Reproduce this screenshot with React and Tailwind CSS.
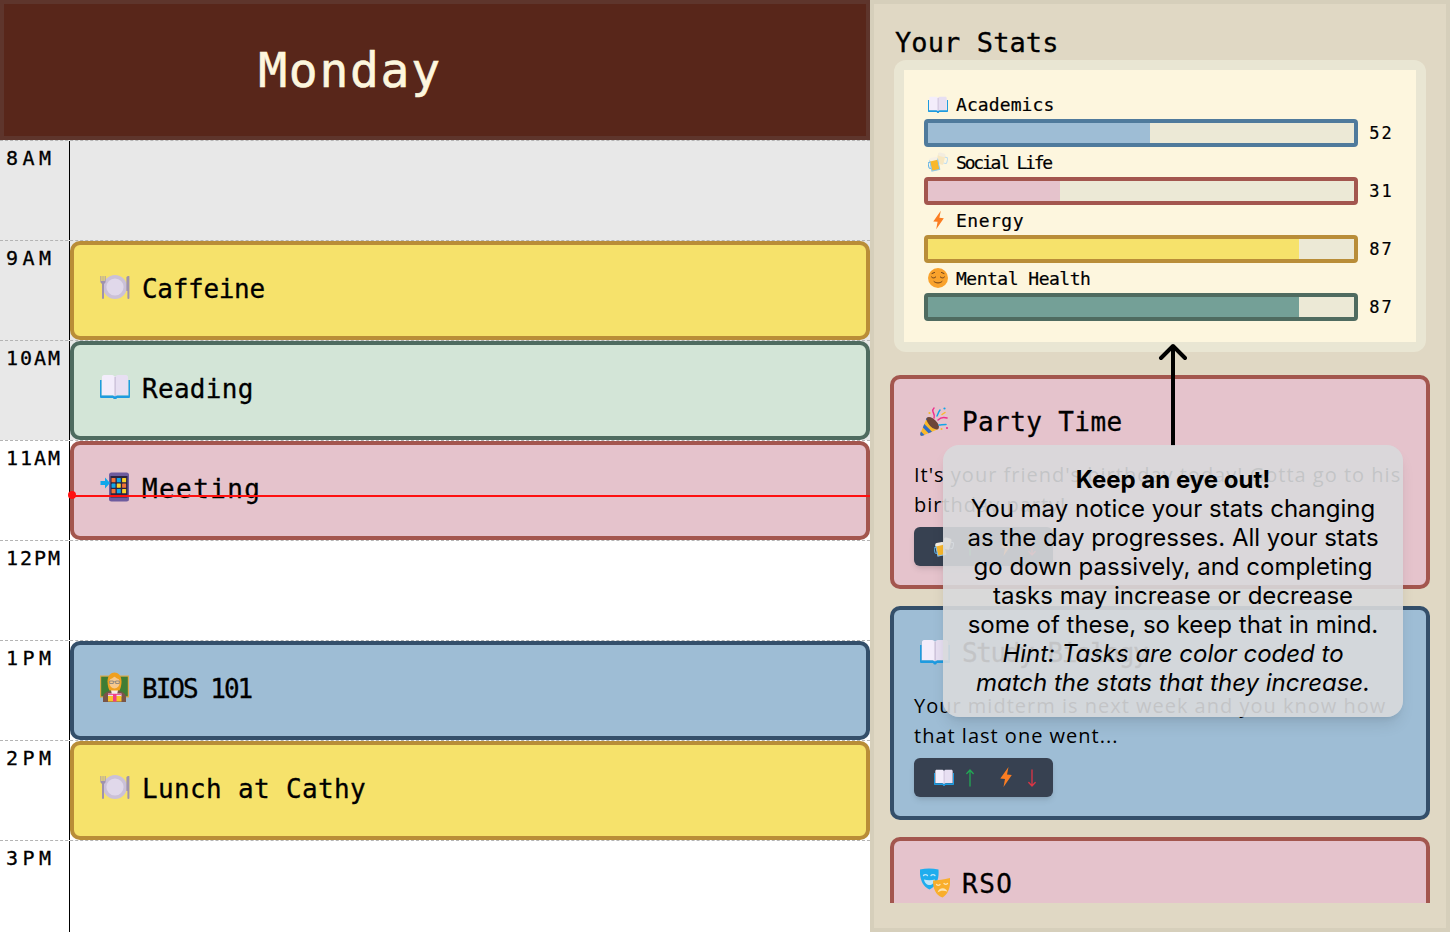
import React from "react";

const mono = "[font-family:'DejaVu_Sans_Mono',monospace]";

function Plate({ s = 30 }) {
  return (
    <svg width={s} height={s * 0.8} viewBox="0 0 30 24">
      <circle cx="15" cy="12" r="12" fill="#cbc1d8" />
      <circle cx="15" cy="12" r="8.6" fill="#e0d8ea" />
      <path d="M0.4 1v5.5c0 1.2.8 2 1.6 2.3V23a1 1 0 0 0 2 0V8.8c.8-.3 1.6-1.1 1.6-2.3V1h-.9v5H3.4V1h-.8v5H1.3V1z" fill="#9f92ad" />
      <path d="M26.4 2.2C27 1 29 .5 29.4 1.2V23a1 1 0 0 1-2 0v-7h-1z" fill="#9f92ad" />
    </svg>
  );
}

function Book({ s = 30 }) {
  return (
    <svg width={s} height={s * 0.85} viewBox="0 0 30 25.5">
      <path d="M0 6h1.5v15.5h27V6H30v17a1 1 0 0 1-1 1H17l-1 1.5h-2L13 24H1a1 1 0 0 1-1-1z" fill="#1e9be0" />
      <path d="M2 3c0-1 .8-2 2-2h8c1.500 0 2.500 1 3 2v19.500c-.8-.8-2-1.500-3-1.500H2z" fill="#f3edfb" />
      <path d="M28 3c0-1-.8-2-2-2h-8c-1.500 0-2.500 1-3 2v19.500c.8-.8 2-1.500 3-1.500h10z" fill="#e7dff2" />
      <rect x="14.600" y="3" width="0.9" height="19" fill="#b9aec9" />
    </svg>
  );
}

function PhoneIn({ s = 30 }) {
  const colors = ["#f1743a", "#11a7ea", "#fbd32c", "#11a7ea", "#fbd32c", "#f1743a", "#f1743a", "#11a7ea", "#fbd32c"];
  return (
    <svg width={s} height={s} viewBox="0 0 30 30">
      <rect x="9" y="0.500" width="20" height="29" rx="2.500" fill="#6e5c9e" />
      <rect x="10.500" y="4" width="17" height="21.500" fill="#2b2440" />
      {colors.map((c, i) => (
        <rect key={i} x={11.500 + (i % 3) * 5.300} y={6 + Math.floor(i / 3) * 5.500} width="4" height="4.300" rx="0.600" fill={c} />
      ))}
      <path d="M0.500 9H5V5.500L10 11l-5 5.500V13H0.500z" fill="#11a7ea" />
    </svg>
  );
}

function Teacher({ s = 30 }) {
  return (
    <svg width={s} height={s} viewBox="0 0 30 30">
      <rect x="0" y="3.500" width="29" height="22" fill="#d8a94c" />
      <rect x="1.200" y="4.700" width="26.600" height="19.600" fill="#3f7d34" />
      <path d="M3 30v-5c0-3.500 4-5.500 7-6h9c3 .5 7 2.500 7 6v5z" fill="#795548" />
      <path d="M11 18h7l-1 5h-5z" fill="#f4efe6" />
      <path d="M7.500 9.500C7.500 3.500 11 .5 14.500.5S21.500 3.500 21.500 9.500c0 4-1 7-2 9h-10c-1-2-2-5-2-9z" fill="#f0a020" />
      <ellipse cx="14.500" cy="10.500" rx="5.200" ry="6" fill="#f7c98f" />
      <path d="M9 7.500c2-.5 4-1.500 5.500-3 1.500 1.500 3.500 2.500 5.500 3V5.500L14.500 3 9 5.500z" fill="#f0a020" />
      <path d="M9.700 9h3.600v2.500H9.700zM15.700 9h3.600v2.500h-3.600zM13.300 9.800h2.400" fill="none" stroke="#7d7d7d" strokeWidth="0.800" />
      <rect x="8" y="21.500" width="13.500" height="3" fill="#e8e0ef" />
      <rect x="8" y="24" width="13.500" height="5.500" fill="#f9c32b" />
      <rect x="13" y="22" width="3.500" height="7.500" fill="#ef3f86" />
      <rect x="8" y="21.800" width="13.500" height="1" fill="#ef3f86" />
    </svg>
  );
}

function Popper({ s = 30 }) {
  return (
    <svg width={s} height={s} viewBox="0 0 30 30">
      <path d="M7 11.500 18.500 23 2.500 29.800c-1.500.5-2.800-.8-2.200-2.300z" fill="#f9b82c" />
      <path d="M4.300 18 12 25.800l-3.400 1.400-5.700-5.800zM.9 25.500 4.500 29l-2 .8c-1.500.4-2.700-.7-2.200-2.200zM7 11.500l8.500 8.500-2 .9-7.700-7.700z" fill="#2e6bc6" />
      <ellipse cx="12.800" cy="17.200" rx="3.800" ry="8" transform="rotate(-45 12.800 17.200)" fill="#6d4638" />
      <g fill="none" strokeWidth="1.500" strokeLinecap="round">
        <path d="M14 12c1-3 0-4-1-6s0-3 1-4" stroke="#ef2f8d" />
        <path d="M18 14c3-3 6-3 9-2" stroke="#ef2f8d" />
        <path d="M17 10c1-2 1.500-4 3-6" stroke="#12a5e8" />
        <path d="M19 19c2 0 4-.5 7-.5" stroke="#12a5e8" />
        <path d="M22 8.500l3-2" stroke="#f9b82c" />
      </g>
      <circle cx="9.500" cy="7" r="1.100" fill="#f9b82c" />
      <circle cx="24.500" cy="2.500" r="1.100" fill="#12a5e8" />
      <circle cx="27" cy="22" r="1.100" fill="#ef2f8d" />
      <circle cx="21.500" cy="23" r="1" fill="#f9b82c" />
    </svg>
  );
}

function Beers({ s = 20 }) {
  return (
    <svg width={s} height={s} viewBox="0 0 20 20">
      <g transform="rotate(14 14 7)">
        <rect x="9" y="2.500" width="7.500" height="10" rx="1" fill="#f7e7c1" />
        <path d="M16.500 4.500h1.500a1.500 1.500 0 0 1 1.500 1.500v3a1.500 1.500 0 0 1-1.500 1.500h-1.500" fill="none" stroke="#bcdcf3" strokeWidth="1" />
        <rect x="9" y="1.200" width="7.500" height="3.500" rx="1.700" fill="#f3ede0" />
      </g>
      <g transform="rotate(-12 6 12)">
        <rect x="2.500" y="7" width="8" height="11.500" rx="1" fill="#f9b82c" />
        <path d="M2.500 9.500h-1a1.200 1.200 0 0 0-1.200 1.200v3.600a1.200 1.200 0 0 0 1.200 1.200h1" fill="none" stroke="#5aaee6" strokeWidth="1" />
        <path d="M2 7h1v11.500H2zM10 7h1v11.500h-1zM2 18h9v1H2z" fill="#8cc8ef" />
        <rect x="2.200" y="5.500" width="8.600" height="3.200" rx="1.600" fill="#f6f0e4" />
      </g>
    </svg>
  );
}

function Bolt({ w = 12, h = 20 }) {
  return (
    <svg width={w} height={h} viewBox="0 0 12 20">
      <path d="M8.500 0 .3 11.500 5 12 3.500 20 11.800 8 7 7.500z" fill="#fb7d22" />
    </svg>
  );
}

function Relieved({ s = 20 }) {
  return (
    <svg width={s} height={s} viewBox="0 0 20 20">
      <circle cx="10" cy="10" r="10" fill="#f9a22c" />
      <g fill="none" stroke="#6b3f1a" strokeWidth="1" strokeLinecap="round">
        <path d="M3.500 9c1 1.300 3 1.300 4.200 0M12.300 9c1.200 1.300 3.200 1.300 4.200 0" />
        <path d="M6 13.500c2.200 2 5.800 2 8 0" />
        <path d="M4 5.500 6.500 4.500M16 5.500 13.500 4.500" />
      </g>
    </svg>
  );
}

function Masks({ s = 30 }) {
  return (
    <svg width={s} height={s} viewBox="0 0 30 30">
      <path d="M0 1.500C6 .2 12 .2 18.500 1.500c.5 7-.5 16-9 20C1.500 18 -.5 9 0 1.500z" fill="#1fadee" />
      <g fill="none" stroke="#bfe6fa" strokeWidth="1.300" strokeLinecap="round">
        <path d="M3.500 7.500c1-1.300 3-1.300 4 0M11 7.500c1-1.300 3-1.300 4 0" />
      </g>
      <path d="M4 11.500c3 1 7.500 1 11 0-.5 3.500-3 5.500-5.500 5.500S4.500 15 4 11.500z" fill="#bfe6fa" />
      <path d="M13 12.500c5 0 11-1 17-2.500.5 7-.5 15-7.500 19.500-7-2.500-9.500-9-9.500-17z" fill="#f9ae2b" />
      <g fill="none" stroke="#fde4b0" strokeWidth="1.300" strokeLinecap="round">
        <path d="M16.500 16.500c1 1 2.500 1 3.500 0M24 15.500c1 1 2.500 1 3.500 0" />
      </g>
      <path d="M17.500 24.500c1-3 3-4 5-4.200s4 1 5 3.500c-3-1.500-7-1.500-10 .7z" fill="#fde4b0" />
    </svg>
  );
}

const rows = [
  { t: "8AM", past: true },
  { t: "9AM", past: true, card: { i: <Plate />, n: "Caffeine", c: "y", k: "tracking-[-0.3px]" } },
  { t: "10AM", past: true, card: { i: <Book />, n: "Reading", c: "g", k: "tracking-[0.3px]" } },
  { t: "11AM", card: { i: <PhoneIn />, n: "Meeting", c: "p", k: "tracking-[1.4px]" } },
  { t: "12PM" },
  { t: "1PM", card: { i: <Teacher />, n: "BIOS 101", c: "b", k: "tracking-[-2px]" } },
  { t: "2PM", card: { i: <Plate />, n: "Lunch at Cathy", c: "y", k: "tracking-[0.35px]" } },
  { t: "3PM" },
];

const cardColors = {
  y: "bg-[#f6e26b] border-[#b98d38]",
  g: "bg-[#d3e5d7] border-[#4f6b60]",
  p: "bg-[#e5c3cc] border-[#a3564e]",
  b: "bg-[#9ebdd5] border-[#344f6a]",
};

function Row({ t, past, card }) {
  return (
    <div className={`flex h-[100px] shrink-0 border-t border-dashed border-[#b4b4b4] ${past ? "bg-[#e8e8e8]" : "bg-white"}`}>
      <div className={`w-[70px] shrink-0 border-r border-black pl-[6px] pt-[4px] text-[20px] leading-[26px] text-black [-webkit-text-stroke:0.3px_black] ${t.length === 3 ? "tracking-[4.5px]" : "tracking-[2px]"} ${mono}`}>
        {t}
      </div>
      {card && (
        <div className={`flex h-[99px] flex-1 items-center rounded-[10px] border-[4px] pl-[26px] ${cardColors[card.c]}`}>
          <span className="flex w-[42px] items-center pb-[8px]">{card.i}</span>
          <span className={`pb-[3px] text-[26px] text-black [-webkit-text-stroke:0.3px_black] ${card.k} ${mono}`}>{card.n}</span>
        </div>
      )}
    </div>
  );
}

function Stat({ i, label, k, v, fill, border }) {
  return (
    <div>
      <div className="flex h-[30px] items-center">
        <span className="flex w-[32px] justify-center pr-[4px]">{i}</span>
        <span className={`text-[18px] text-black [-webkit-text-stroke:0.2px_black] ${k} ${mono}`}>{label}</span>
      </div>
      <div className="flex items-center">
        <div className={`h-[28px] w-[434px] overflow-hidden rounded-[4px] border-[4px] bg-[#ece9d6] ${border}`}>
          <div className={`h-full ${fill}`} style={{ width: `${v}%` }} />
        </div>
        <span className={`w-[47px] pt-[1px] text-center text-[17px] tracking-[2px] text-black [-webkit-text-stroke:0.2px_black] ${mono}`}>{v}</span>
      </div>
    </div>
  );
}

function ArrowUp() {
  return (
    <svg width="8" height="18" viewBox="0 0 8 18" fill="none" stroke="#22a854" strokeWidth="1.300" strokeLinecap="round" strokeLinejoin="round">
      <path d="M4 17V1M.8 4.500 4 1l3.200 3.500" />
    </svg>
  );
}

function ArrowDown() {
  return (
    <svg width="8" height="18" viewBox="0 0 8 18" fill="none" stroke="#dc3545" strokeWidth="1.300" strokeLinecap="round" strokeLinejoin="round">
      <path d="M4 1v16M.8 13.500 4 17l3.200-3.500" />
    </svg>
  );
}

function Chip({ icon }) {
  return (
    <div className="mt-[7px] flex h-[39px] w-[139px] items-center rounded-[6px] bg-[#374151] pl-[20px] shadow-md">
      <span className="flex w-[20px] justify-center">{icon}</span>
      <span className="ml-[12px] flex"><ArrowUp /></span>
      <span className="ml-[26px] flex pb-[2px]"><Bolt w={12} h={20} /></span>
      <span className="ml-[16px] flex"><ArrowDown /></span>
    </div>
  );
}

function Task({ i, title, k, lines, cls, chip }) {
  return (
    <div className={`h-[214px] w-[540px] shrink-0 rounded-[10px] border-[4px] px-[20px] ${cls}`}>
      <div className="mt-[27px] flex h-[30px] items-center">
        <span className="flex w-[48px] pl-[6px]">{i}</span>
        <span className={`pt-[2px] text-[26px] text-black [-webkit-text-stroke:0.3px_black] ${k} ${mono}`}>{title}</span>
      </div>
      {lines && (
        <p className="mt-[24px] text-[20px] leading-[30px] tracking-[1px] text-black [font-family:'Open_Sans',sans-serif]">
          {lines}
        </p>
      )}
      {chip && <Chip icon={chip} />}
    </div>
  );
}

export default function App() {
  return (
    <div className="relative flex h-[932px] w-[1450px] overflow-hidden bg-white">
      <div className="flex w-[870px] shrink-0 flex-col">
        <div className={`flex h-[140px] shrink-0 items-center justify-center border-[4px] border-[#5e352c] bg-[#58261a] pr-[170px] text-[48px] tracking-[1.7px] text-[#fdf6de] [-webkit-text-stroke:0.6px_#fdf6de] ${mono}`}>
          Monday
        </div>
        {rows.map((r) => (
          <Row key={r.t} {...r} />
        ))}
      </div>

      <div className="flex w-[580px] shrink-0 flex-col border-[4px] border-[#d6cfbb] bg-[#e0d8c4] pl-[16px]">
        <h2 className={`mt-[21px] ml-[5px] text-[27px] leading-[35px] tracking-[0.1px] text-black [-webkit-text-stroke:0.3px_black] ${mono}`}>Your Stats</h2>
        <div className="ml-[4px] w-[532px] rounded-[12px] bg-[#e9e6d3] p-[10px]">
          <div className="h-[272px] bg-[#fdf6de] pl-[20px] pt-[19px]">
            <Stat i={<Book s={20} />} label="Academics" k="tracking-[0.1px]" v={52} fill="bg-[#9ebdd5]" border="border-[#4f7a9c]" />
            <Stat i={<Beers s={20} />} label="Social Life" k="tracking-[-2.2px]" v={31} fill="bg-[#e5c3cc]" border="border-[#a3564e]" />
            <Stat i={<Bolt w={11} h={20} />} label="Energy" k="tracking-[0.5px]" v={87} fill="bg-[#f6e26b]" border="border-[#b98d38]" />
            <Stat i={<Relieved s={20} />} label="Mental Health" k="tracking-[-0.5px]" v={87} fill="bg-[#74a097]" border="border-[#4f6b60]" />
          </div>
        </div>
        <div className="mt-[23px] flex h-[528px] flex-col gap-[17px] overflow-hidden">
          <Task i={<Popper />} title="Party Time" k="tracking-[0.4px]" cls="bg-[#e5c3cc] border-[#a3564e]" chip={<Beers s={20} />} lines="It's your friend's birthday today! Gotta go to his birthday party!" />
          <Task i={<Book />} title="Study Biology" k="tracking-[-1.4px]" cls="bg-[#9ebdd5] border-[#344f6a]" chip={<Book s={20} />} lines="Your midterm is next week and you know how that last one went..." />
          <Task i={<Masks />} title="RSO" k="tracking-[1.5px]" cls="bg-[#e5c3cc] border-[#a3564e]" />
        </div>
      </div>

      <div className="absolute left-[70px] right-[580px] top-[495px] h-[2px] bg-[#ff1010]" />
      <div className="absolute left-[68px] top-[491px] h-[8px] w-[8px] rounded-full bg-[#ff1010]" />

      <svg className="absolute left-[1153px] top-[340px]" width="40" height="106" viewBox="0 0 40 106" fill="none" stroke="#000" strokeWidth="4" strokeLinecap="round" strokeLinejoin="round">
        <path d="M20 105V6M8 18 20 6l12 12" />
      </svg>

      <div className="absolute left-[943px] top-[445px] h-[272px] w-[460px] rounded-[16px] bg-[#d8d9db]/90 px-[24px] pt-[20px] text-center text-[24px] leading-[29px] text-black shadow-lg [font-family:Inter,sans-serif]">
        <div className="font-bold">Keep an eye out!</div>
        <div>You may notice your stats changing as the day progresses. All your stats go down passively, and completing tasks may increase or decrease some of these, so keep that in mind.</div>
        <div className="italic">Hint: Tasks are color coded to match the stats that they increase.</div>
      </div>
    </div>
  );
}
